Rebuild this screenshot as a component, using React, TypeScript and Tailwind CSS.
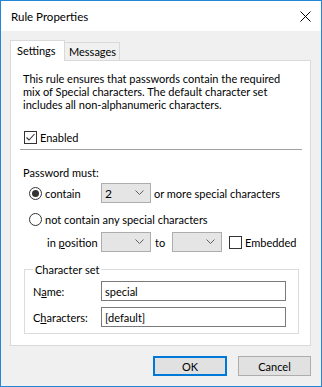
import React from "react";

const Chevron = () => (
  <svg width="9" height="6" viewBox="0 0 9 6" className="block">
    <polyline points="0.5,0.5 4.5,4.5 8.5,0.5" fill="none" stroke="#606060" strokeWidth="1" />
  </svg>
);

const Combo = ({ value, w }: { value?: string; w: string }) => (
  <div className={`${w} h-[20px] bg-[#e5e5e5] border border-[#adadad] flex items-center justify-between pl-[3px] pr-[6px] shrink-0`}>
    <span className="text-[12px]">{value ?? ""}</span>
    <Chevron />
  </div>
);

const Radio = ({ checked }: { checked?: boolean }) => (
  <div className="w-[13px] h-[13px] rounded-full border border-[#333] bg-white flex items-center justify-center shrink-0">
    {checked && <div className="w-[7px] h-[7px] rounded-full bg-[#333]" />}
  </div>
);

const Check = ({ checked }: { checked?: boolean }) => (
  <div className="w-[13px] h-[13px] border border-[#333] bg-white flex items-center justify-center shrink-0">
    {checked && (
      <svg width="11" height="11" viewBox="0 0 11 11" className="block">
        <polyline points="1.5,5.5 4,8 9.5,2" fill="none" stroke="#333" strokeWidth="1.1" />
      </svg>
    )}
  </div>
);

export default function App() {
  return (
    <div
      className="w-[322px] h-[387px] border border-[#2386d6] bg-[#f0f0f0] flex flex-col text-[11px] leading-[13px] text-black whitespace-nowrap"
      style={{ fontFamily: 'Lato, "Noto Sans", sans-serif' }}
    >
      <div className="h-[30px] bg-white flex items-center justify-between pl-[10px] pr-[10px] shrink-0">
        <span className="text-[11.5px]">Rule Properties</span>
        <svg width="11" height="11" viewBox="0 0 11 11" className="block">
          <line x1="0.5" y1="0.5" x2="10.5" y2="10.5" stroke="#000" strokeWidth="1" />
          <line x1="10.5" y1="0.5" x2="0.5" y2="10.5" stroke="#000" strokeWidth="1" />
        </svg>
      </div>

      <div className="flex items-end ml-[9px] mt-[9px] h-[21px] relative z-10">
        <div className="w-[55px] h-[21px] bg-white border border-b-0 border-[#d9d9d9] flex items-center pl-[6px] pb-[1px]">
          Settings
        </div>
        <div className="w-[55px] h-[19px] bg-[#f0f0f0] border border-l-0 border-b-[#d9d9d9] border-[#d9d9d9] flex items-center pl-[4px]">
          Messages
        </div>
      </div>

      <div className="ml-[9px] w-[301px] h-[286px] -mt-px bg-white border border-[#d9d9d9] flex flex-col shrink-0">
        <p className="mt-[11px] pl-[12px] pr-[8px] leading-[13px]">
          This rule ensures that passwords contain the required
          <br />
          mix of Special characters. The default character set
          <br />
          includes all non-alphanumeric characters.
        </p>

        <div className="mt-[20px] pl-[13px] h-[13px] flex items-center gap-[3px]">
          <Check checked />
          <span>Enabled</span>
        </div>

        <div className="mt-[5px] ml-[9px] mr-[8px] h-px bg-[#a0a0a0]" />

        <div className="mt-[15px] pl-[12px] h-[14px] flex items-center">Password must:</div>

        <div className="mt-[4px] pl-[18px] h-[20px] flex items-center">
          <Radio checked />
          <span className="ml-[3px] w-[56px] shrink-0">contain</span>
          <Combo value="2" w="w-[50px]" />
          <span className="ml-[3px]">or more special characters</span>
        </div>

        <div className="mt-[6px] pl-[18px] h-[20px] flex items-center">
          <Radio />
          <span className="ml-[3px]">not contain any special characters</span>
        </div>

        <div className="mt-[3px] pl-[36px] h-[20px] flex items-center">
          <span className="w-[54px] shrink-0">
            in <span className="underline">p</span>osition
          </span>
          <Combo w="w-[50px]" />
          <span className="ml-[4px] w-[17px] shrink-0">to</span>
          <Combo w="w-[50px]" />
          <div className="ml-[7px]">
            <Check />
          </div>
          <span className="ml-[3px]">Embedded</span>
        </div>

        <div className="mt-[17px] ml-[13px] w-[275px] h-[65px] border border-[#dcdcdc] relative flex flex-col pl-[8px]">
          <span className="absolute -top-[7px] left-[8px] bg-white px-[2px] leading-[13px]">Character set</span>
          <div className="mt-[11px] h-[20px] flex items-center">
            <span className="w-[68px] shrink-0">
              N<span className="underline">a</span>me:
            </span>
            <div className="w-[185px] h-[20px] border border-[#7a7a7a] flex items-center pl-[3px]">special</div>
          </div>
          <div className="mt-[6px] h-[20px] flex items-center">
            <span className="w-[68px] shrink-0">
              C<span className="underline">h</span>aracters:
            </span>
            <div className="w-[185px] h-[20px] border border-[#7a7a7a] flex items-center pl-[3px]">[default]</div>
          </div>
        </div>
      </div>

      <div className="mt-[10px] mr-[10px] flex justify-end gap-[11px]">
        <button className="w-[74px] h-[20px] bg-[#e1e1e1] border-2 border-[#0078d7] flex items-center justify-center">
          OK
        </button>
        <button className="w-[73px] h-[20px] bg-[#e1e1e1] border border-[#adadad] flex items-center justify-center">
          Cancel
        </button>
      </div>
    </div>
  );
}
